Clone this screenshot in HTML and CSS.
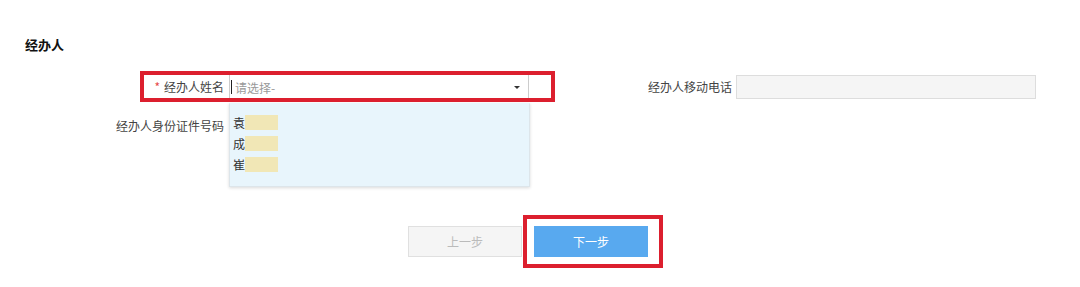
FILE: index.html
```html
<!DOCTYPE html>
<html lang="zh">
<head>
<meta charset="utf-8">
<title>经办人</title>
<link rel="stylesheet" href="styles.css">
</head>
<body>
<div class="page">
  <div class="section-title">经办人</div>
  <div class="form">
    <div class="row">
      <label class="label label-left"><span class="req">*</span>经办人姓名</label>
      <div class="select">
        <span class="caret"></span><span class="placeholder">请选择-</span>
        <span class="arrow"></span>
        <ul class="dropdown">
          <li class="opt">袁<span class="mask"></span></li>
          <li class="opt">成<span class="mask"></span></li>
          <li class="opt">崔<span class="mask"></span></li>
        </ul>
      </div>
      <label class="label label-right">经办人移动电话</label>
      <div class="input disabled"></div>
    </div>
    <div class="row row2">
      <label class="label label-left">经办人身份证件号码</label>
      <div class="input hidden-input"></div>
    </div>
  </div>
  <div class="actions">
    <button class="btn btn-prev" type="button">上一步</button>
    <button class="btn btn-next" type="button">下一步</button>
  </div>
  <div class="mark mark-name"></div>
  <div class="mark mark-next"></div>
</div>
</body>
</html>
```
FILE: styles.css
```css
html, body {
  margin: 0;
  padding: 0;
  background: #fff;
}
.page {
  position: relative;
  width: 1080px;
  height: 287px;
  overflow: hidden;
  font-family: "Noto Sans CJK SC", "Noto Sans", sans-serif;
  font-size: 12px;
  color: #444;
}
.section-title {
  padding: 36px 0 0 25px;
  font-size: 13px;
  line-height: 18px;
  font-weight: bold;
  color: #111;
}
.form {
  margin-top: 20px;
}
.row {
  display: flex;
  align-items: center;
  height: 26px;
}
.row2 {
  margin-top: 13px;
}
.label {
  box-sizing: border-box;
  text-align: right;
  white-space: nowrap;
  line-height: 26px;
}
.label-left {
  width: 229px;
  padding-right: 5px;
}
.label-right {
  width: 207px;
  padding-right: 4px;
}
.req {
  color: #e64b4b;
  margin-right: 4px;
}
.select {
  position: relative;
  box-sizing: border-box;
  width: 300px;
  height: 26px;
  border: 1px solid #ccc;
  background: #fff;
  display: flex;
  align-items: center;
  padding-left: 1px;
}
.caret {
  width: 1px;
  height: 14px;
  background: #222;
  margin-right: 3px;
}
.placeholder {
  color: #999;
}
.arrow {
  position: absolute;
  right: 8px;
  top: 11px;
  width: 0;
  height: 0;
  border-left: 3px solid transparent;
  border-right: 3px solid transparent;
  border-top: 3px solid #333;
}
.dropdown {
  position: absolute;
  top: 28px;
  left: -1px;
  width: 301px;
  box-sizing: border-box;
  margin: 0;
  padding: 8px 0 11px 3px;
  list-style: none;
  background: #e8f5fc;
  border: 1px solid #dde5ea;
  border-top-color: #e8f5fc;
  box-shadow: 0 1px 3px rgba(0, 0, 0, 0.15);
  z-index: 2;
}
.opt {
  display: flex;
  align-items: center;
  height: 21px;
  color: #333;
  font-size: 12px;
}
.mask {
  display: inline-block;
  width: 33px;
  height: 15px;
  background: #f1e7b6;
}
.input {
  box-sizing: border-box;
  width: 300px;
  height: 24px;
  border: 1px solid #ddd;
  background: #fff;
}
.input.disabled {
  background: #f5f5f5;
}
.actions {
  display: flex;
  gap: 12px;
  padding-left: 408px;
  margin-top: 87px;
}
.btn {
  box-sizing: border-box;
  width: 114px;
  height: 31px;
  font-family: inherit;
  font-size: 12px;
  border: 1px solid transparent;
  padding: 0;
}
.btn-prev {
  background: #f5f5f5;
  border-color: #e0e0e0;
  color: #bbb;
}
.btn-next {
  background: #58a9ef;
  border-color: #58a9ef;
  color: #fff;
}
.mark {
  position: absolute;
  box-sizing: border-box;
  border: 4px solid #dc1f2e;
  z-index: 3;
}
.mark-name {
  left: 140px;
  top: 71px;
  width: 415px;
  height: 31px;
}
.mark-next {
  left: 523px;
  top: 215px;
  width: 140px;
  height: 53px;
}
```
